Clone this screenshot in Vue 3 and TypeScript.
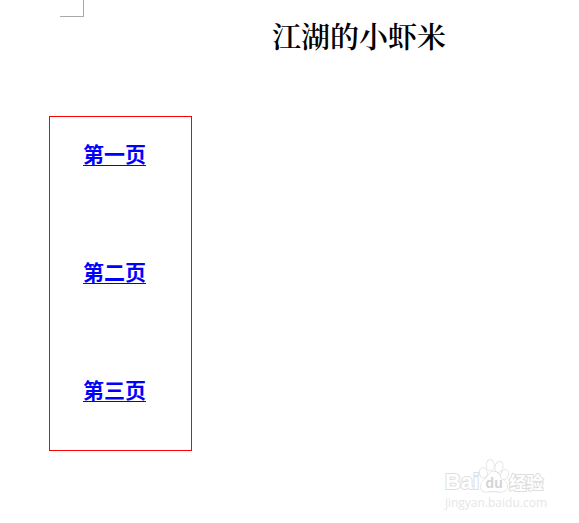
<script setup lang="ts">
interface PageLink {
  id: string
  label: string
}

const title = '江湖的小虾米'
const links: PageLink[] = [
  { id: 'page-1', label: '第一页' },
  { id: 'page-2', label: '第二页' },
  { id: 'page-3', label: '第三页' },
]
</script>

<template>
  <main class="page">
    <header class="head">
      <span class="crop-mark" aria-hidden="true"></span>
      <h1 class="title">{{ title }}</h1>
    </header>

    <nav class="contents">
      <a v-for="link in links" :key="link.id" class="link" :href="`#${link.id}`">{{ link.label }}</a>
    </nav>

    <aside class="watermark">
      <div class="brand">
        <span class="latin">Bai</span>
        <span class="paw">
          <svg width="30" height="34" viewBox="0 0 30 34" aria-hidden="true">
            <g fill="#fff" stroke="#dcdcdc" stroke-width="1.3">
              <path d="M14.8 12.5C11 12.5 10.5 15.5 7.5 18.5C4 21.8 1.5 24 1.5 27.8C1.6 31.5 4.5 33 8 32.8C12 32.2 17 32.2 21 32.8C25 33.1 28 31.5 28.2 27.8C28.3 24 25.5 21.5 22.5 18.5C19.5 15.5 18.8 12.5 14.8 12.5Z" />
              <ellipse cx="4.3" cy="13.8" rx="3.6" ry="5" transform="rotate(-8 4.3 13.8)" />
              <ellipse cx="11.2" cy="6.2" rx="3.7" ry="5.3" />
              <ellipse cx="20" cy="7.8" rx="3.6" ry="5.3" transform="rotate(14 20 7.8)" />
              <ellipse cx="25.5" cy="15.6" rx="3.5" ry="4.9" transform="rotate(20 25.5 15.6)" />
            </g>
          </svg>
          <span class="du">du</span>
        </span>
        <span class="han">经验</span>
      </div>
      <div class="site">jingyan.baidu.com</div>
    </aside>
  </main>
</template>

<style>
body {
  margin: 0;
  background: #fff;
}
</style>

<style scoped>
.page {
  position: relative;
  box-sizing: border-box;
  min-height: 100vh;
  padding-left: 49px;
  font-family: "Liberation Sans", "Noto Sans CJK SC", sans-serif;
}

.head {
  display: flex;
  align-items: flex-start;
  gap: 188px;
  height: 116px;
  padding-left: 11px;
}

.crop-mark {
  flex: none;
  box-sizing: border-box;
  width: 24px;
  height: 17px;
  border-right: 1px solid #aaa;
  border-bottom: 1px solid #aaa;
}

.title {
  margin: 0;
  padding-top: 15px;
  color: #000;
  font-family: "Noto Serif CJK SC", "Noto Sans CJK SC", serif;
  font-size: 29px;
  font-weight: 600;
  line-height: 42px;
  white-space: nowrap;
}

.contents {
  display: flex;
  flex-direction: column;
  align-items: flex-start;
  gap: 88px;
  box-sizing: border-box;
  width: fit-content;
  padding: 21px 45px 46px 33px;
  border: 1px solid #f00;
}

.link {
  color: #00f;
  font-family: "Noto Sans CJK SC", sans-serif;
  font-size: 21px;
  font-weight: 700;
  line-height: 30px;
  text-decoration: underline;
  text-decoration-thickness: 1px;
  text-underline-offset: 3px;
  text-decoration-skip-ink: none;
}

.watermark {
  position: absolute;
  right: 32px;
  bottom: 12px;
  color: #fff;
  -webkit-text-stroke: 2px #dedede;
  paint-order: stroke fill;
  white-space: nowrap;
}

.brand {
  display: flex;
  align-items: flex-end;
  height: 34px;
}

.latin {
  font-size: 22px;
  font-weight: 700;
  line-height: 22px;
}

.paw {
  display: grid;
  width: 30px;
}

.paw > * {
  grid-area: 1 / 1;
}

.du {
  align-self: end;
  justify-self: center;
  padding-bottom: 3px;
  color: #d4d4d4;
  font-size: 14px;
  font-weight: 700;
  line-height: 14px;
  -webkit-text-stroke: 0;
}

.han {
  font-family: "Noto Sans CJK SC", sans-serif;
  font-size: 17px;
  font-weight: 700;
  line-height: 22px;
}

.site {
  padding-top: 2px;
  color: #e6e6e6;
  font-family: "Open Sans", sans-serif;
  font-size: 12px;
  line-height: 16px;
  -webkit-text-stroke: 0;
}
</style>
